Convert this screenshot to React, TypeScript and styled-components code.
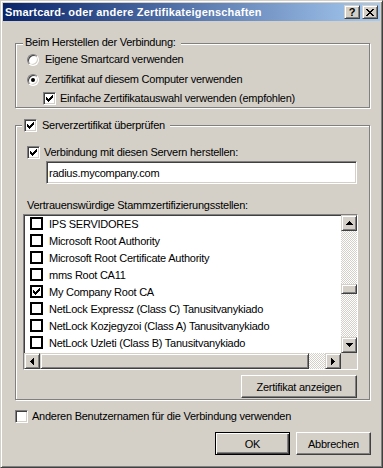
import styled, { createGlobalStyle } from "styled-components";

const GlobalStyle = createGlobalStyle`
	* {
		box-sizing: border-box;
	}
	html, body {
		margin: 0;
		padding: 0;
		background: #d4d0c8;
	}
	body {
		font-family: "Liberation Sans", Arial, sans-serif;
		font-size: 11px;
		letter-spacing: -0.25px;
		color: #000;
	}
`;

const raised = `
	background: #d4d0c8;
	border: 1px solid;
	border-color: #d4d0c8 #404040 #404040 #d4d0c8;
	box-shadow: inset 1px 1px #fff, inset -1px -1px #808080;
`;

const sunken = `
	background: #fff;
	border: 1px solid;
	border-color: #808080 #fff #fff #808080;
	box-shadow: inset 1px 1px #404040, inset -1px -1px #d4d0c8;
`;

const dotted = `
	background: repeating-conic-gradient(#fff 0 25%, #d4d0c8 0 50%) 0 0 / 2px 2px;
`;

const Window = styled.div`
	width: 383px;
	height: 468px;
	display: flex;
	flex-direction: column;
	padding: 2px;
	background: #d4d0c8;
	border: 1px solid;
	border-color: #d4d0c8 #404040 #404040 #d4d0c8;
	box-shadow: inset 1px 1px #fff, inset -1px -1px #808080;
`;

const TitleBar = styled.div`
	height: 18px;
	display: flex;
	align-items: center;
	padding: 0 2px;
	background: linear-gradient(to right, #0a246a, #a6caf0);
	color: #fff;
	font-weight: bold;
	font-size: 11px;
	letter-spacing: 0.2px;
`;

const Title = styled.span`
	flex: 1;
	white-space: nowrap;
`;

const TitleButton = styled.span`
	${raised}
	width: 16px;
	height: 14px;
	display: flex;
	align-items: center;
	justify-content: center;
	color: #000;
	font-size: 11px;
	font-weight: bold;
	line-height: 12px;
	letter-spacing: 0;

	& + & {
		margin-left: 2px;
	}
`;

const Body = styled.div`
	flex: 1;
	display: flex;
	flex-direction: column;
	padding: 22px 9px 0 12px;
`;

const GroupBox = styled.div<{ $mt?: number; $pb: number }>`
	display: flex;
	flex-direction: column;
	margin: ${p => p.$mt ?? 0}px 1px 0 0;
	padding-bottom: ${p => p.$pb}px;
	border: 1px solid #808080;
	box-shadow: inset 1px 1px #fff, 1px 1px #fff;
`;

const Legend = styled.div<{ $mt: number; $ml: number }>`
	align-self: flex-start;
	display: flex;
	align-items: center;
	gap: 5px;
	height: 13px;
	line-height: 13px;
	margin: ${p => p.$mt}px 0 0 ${p => p.$ml}px;
	padding: 0 5px 0 2px;
	background: #d4d0c8;
	white-space: nowrap;
`;

const Row = styled.div<{ $mt?: number; $ml?: number; $gap?: number }>`
	display: flex;
	align-items: center;
	gap: ${p => p.$gap ?? 4}px;
	height: 13px;
	line-height: 13px;
	margin: ${p => p.$mt ?? 0}px 0 0 ${p => p.$ml ?? 0}px;
	white-space: nowrap;
`;

const RadioBox = styled.span<{ $checked?: boolean }>`
	${sunken}
	width: 12px;
	height: 12px;
	border-radius: 50%;
	display: flex;
	align-items: center;
	justify-content: center;
	flex-shrink: 0;

	&::after {
		content: "";
		display: ${p => (p.$checked ? "block" : "none")};
		width: 4px;
		height: 4px;
		border-radius: 50%;
		background: #000;
	}
`;

const CheckBox = styled.span`
	${sunken}
	width: 13px;
	height: 13px;
	display: flex;
	align-items: center;
	justify-content: center;
	flex-shrink: 0;
`;

const FlatCheck = styled.span`
	width: 13px;
	height: 13px;
	border: 2px solid #000;
	background: #fff;
	display: flex;
	align-items: center;
	justify-content: center;
	flex-shrink: 0;
`;

const TextField = styled.input`
	${sunken}
	width: 311px;
	height: 23px;
	margin: 2px 0 0 30px;
	padding: 0 0 0 2px;
	font: inherit;
	letter-spacing: inherit;
	color: #000;
	outline: none;
`;

const Label = styled.div`
	height: 13px;
	line-height: 13px;
	margin: 15px 0 0 11px;
`;

const ListBox = styled.div`
	${sunken}
	width: 335px;
	height: 156px;
	margin: 2px 0 0 7px;
	display: grid;
	grid-template-columns: 1fr 16px;
	grid-template-rows: 1fr 16px;
`;

const Items = styled.div`
	overflow: hidden;
`;

const Item = styled.div`
	height: 17px;
	display: flex;
	align-items: center;
	gap: 6px;
	padding-left: 6px;
	white-space: nowrap;
`;

const VScroll = styled.div`
	display: flex;
	flex-direction: column;
`;

const HScroll = styled.div`
	display: flex;
`;

const Corner = styled.div`
	background: #d4d0c8;
`;

const Arrow = styled.span`
	${raised}
	width: 16px;
	height: 16px;
	display: flex;
	align-items: center;
	justify-content: center;
	flex-shrink: 0;
`;

const Track = styled.span<{ $size?: number }>`
	${dotted}
	flex: ${p => (p.$size ? `0 0 ${p.$size}px` : "1")};
`;

const Thumb = styled.span<{ $size?: number }>`
	${raised}
	flex: ${p => (p.$size ? `0 0 ${p.$size}px` : "1")};
`;

const Button = styled.button<{ $default?: boolean; $width: number }>`
	width: ${p => p.$width}px;
	height: 23px;
	padding: 0;
	font: inherit;
	letter-spacing: inherit;
	color: #000;
	background: #d4d0c8;
	border: 1px solid;
	border-color: ${p => (p.$default ? "#000" : "#fff #404040 #404040 #fff")};
	box-shadow: ${p =>
		p.$default
			? "inset 1px 1px #fff, inset -1px -1px #404040, inset -2px -2px #808080"
			: "inset -1px -1px #808080"};
`;

const ShowButton = styled(Button)`
	align-self: flex-end;
	margin: 5px 12px 0 0;
`;

const Buttons = styled.div`
	display: flex;
	justify-content: flex-end;
	gap: 6px;
	margin-top: 9px;
`;

const Tick = () => (
	<svg width="7" height="7" viewBox="0 0 7 7" shapeRendering="crispEdges">
		<path d="M0 2h1v3H0zM1 3h1v3H1zM2 4h1v3H2zM3 3h1v3H3zM4 2h1v3H4zM5 1h1v3H5zM6 0h1v3H6z" fill="#000" />
	</svg>
);

const Close = () => (
	<svg width="8" height="7" viewBox="0 0 8 7" shapeRendering="crispEdges">
		<path
			d="M0 0h2v1H0zM6 0h2v1H6zM1 1h2v1H1zM5 1h2v1H5zM2 2h4v1H2zM3 3h2v1H3zM2 4h4v1H2zM1 5h2v1H1zM5 5h2v1H5zM0 6h2v1H0zM6 6h2v1H6z"
			fill="#000"
		/>
	</svg>
);

const arrows = {
	up: { w: 7, h: 4, d: "M3 0h1v1H3zM2 1h3v1H2zM1 2h5v1H1zM0 3h7v1H0z" },
	down: { w: 7, h: 4, d: "M0 0h7v1H0zM1 1h5v1H1zM2 2h3v1H2zM3 3h1v1H3z" },
	left: { w: 4, h: 7, d: "M3 0h1v7H3zM2 1h1v5H2zM1 2h1v3H1zM0 3h1v1H0z" },
	right: { w: 4, h: 7, d: "M0 0h1v7H0zM1 1h1v5H1zM2 2h1v3H2zM3 3h1v1H3z" },
};

const ArrowButton = ({ dir }: { dir: keyof typeof arrows }) => {
	const a = arrows[dir];
	return (
		<Arrow>
			<svg width={a.w} height={a.h} viewBox={`0 0 ${a.w} ${a.h}`} shapeRendering="crispEdges">
				<path d={a.d} fill="#000" />
			</svg>
		</Arrow>
	);
};

const Check = ({ checked }: { checked?: boolean }) => <CheckBox>{checked && <Tick />}</CheckBox>;

const certificates = [
	{ name: "IPS SERVIDORES" },
	{ name: "Microsoft Root Authority" },
	{ name: "Microsoft Root Certificate Authority" },
	{ name: "mms Root CA11" },
	{ name: "My Company Root CA", checked: true },
	{ name: "NetLock Expressz (Class C) Tanusitvanykiado" },
	{ name: "NetLock Kozjegyzoi (Class A) Tanusitvanykiado" },
	{ name: "NetLock Uzleti (Class B) Tanusitvanykiado" },
];

export default function App() {
	return (
		<>
			<GlobalStyle />
			<Window>
				<TitleBar>
					<Title>Smartcard- oder andere Zertifikateigenschaften</Title>
					<TitleButton>?</TitleButton>
					<TitleButton>
						<Close />
					</TitleButton>
				</TitleBar>
				<Body>
					<GroupBox $pb={2}>
						<Legend $mt={-8} $ml={7}>
							Beim Herstellen der Verbindung:
						</Legend>
						<Row $mt={4} $ml={11} $gap={6}>
							<RadioBox />
							Eigene Smartcard verwenden
						</Row>
						<Row $mt={7} $ml={11} $gap={6}>
							<RadioBox $checked />
							Zertifikat auf diesem Computer verwenden
						</Row>
						<Row $mt={6} $ml={27}>
							<Check checked />
							Einfache Zertifikatauswahl verwenden (empfohlen)
						</Row>
					</GroupBox>

					<GroupBox $mt={17} $pb={1}>
						<Legend $mt={-7} $ml={6}>
							<Check checked />
							Serverzertifikat überprüfen
						</Legend>
						<Row $mt={14} $ml={11}>
							<Check checked />
							Verbindung mit diesen Servern herstellen:
						</Row>
						<TextField readOnly defaultValue="radius.mycompany.com" />
						<Label>Vertrauenswürdige Stammzertifizierungsstellen:</Label>
						<ListBox>
							<Items>
								{certificates.map(c => (
									<Item key={c.name}>
										<FlatCheck>{c.checked && <Tick />}</FlatCheck>
										{c.name}
									</Item>
								))}
							</Items>
							<VScroll>
								<ArrowButton dir="up" />
								<Track $size={53} />
								<Thumb $size={10} />
								<Track />
								<ArrowButton dir="down" />
							</VScroll>
							<HScroll>
								<ArrowButton dir="left" />
								<Thumb />
								<Track $size={16} />
								<ArrowButton dir="right" />
							</HScroll>
							<Corner />
						</ListBox>
						<ShowButton $width={116}>Zertifikat anzeigen</ShowButton>
					</GroupBox>

					<Row $mt={10}>
						<Check />
						Anderen Benutzernamen für die Verbindung verwenden
					</Row>
					<Buttons>
						<Button $default $width={75}>
							OK
						</Button>
						<Button $width={75}>Abbrechen</Button>
					</Buttons>
				</Body>
			</Window>
		</>
	);
}
